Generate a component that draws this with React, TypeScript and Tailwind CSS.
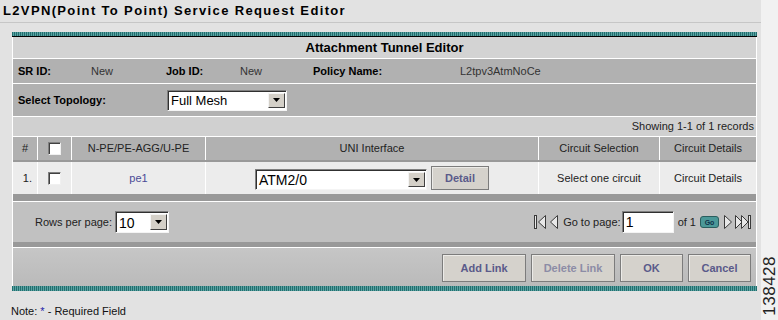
import React from 'react';

// small drop-down arrow used by the classic selects
function DownArrow() {
  return (
    <svg width="7" height="4" viewBox="0 0 7 4">
      <path d="M0 0 H7 L3.5 4 Z" fill="#000" />
    </svg>
  );
}

function Select({ value, className, textClass }: { value: string; className: string; textClass: string }) {
  return (
    <div className={`flex bg-white border border-t-[#808080] border-l-[#808080] border-r-[#f4f4f4] border-b-[#f4f4f4] shadow-[inset_1px_1px_0_#303030] ${className}`}>
      <div className={`flex-1 flex items-center pl-[3px] pt-[1px] text-black leading-none ${textClass}`}>{value}</div>
      <div className="w-[17px] my-[2px] mr-[1px] bg-[#d4d0c8] border border-t-[#f4f4f4] border-l-[#f4f4f4] border-r-[#404040] border-b-[#404040] flex items-center justify-center">
        <DownArrow />
      </div>
    </div>
  );
}

function Checkbox() {
  return (
    <div className="w-[13px] h-[13px] bg-white border border-t-[#808080] border-l-[#808080] border-r-[#f0f0f0] border-b-[#f0f0f0] shadow-[inset_1px_1px_0_#404040]" />
  );
}

function Btn({ label, className, disabled }: { label: string; className: string; disabled?: boolean }) {
  return (
    <div
      className={`flex items-center justify-center bg-[#d5d2cc] border border-[#7c7c7c] shadow-[inset_1px_1px_0_#ecebe8] font-bold text-[11px] ${
        disabled ? 'text-[#8c8ca6]' : 'text-[#5a5a8a]'
      } ${className}`}
    >
      {label}
    </div>
  );
}

function PagerIcon({ kind }: { kind: 'first' | 'prev' | 'next' | 'last' }) {
  const stroke = '#3a3a3a';
  if (kind === 'first')
    return (
      <svg width="12" height="16" viewBox="0 0 12 16">
        <rect x="0.5" y="1.5" width="2" height="13" fill="#e8e8e8" stroke={stroke} />
        <path d="M11.5 1.5 L4.5 8 L11.5 14.5 Z" fill="#e8e8e8" stroke={stroke} />
      </svg>
    );
  if (kind === 'prev')
    return (
      <svg width="9" height="16" viewBox="0 0 9 16">
        <path d="M8.5 1.5 L1.5 8 L8.5 14.5 Z" fill="#e8e8e8" stroke={stroke} />
      </svg>
    );
  if (kind === 'next')
    return (
      <svg width="9" height="16" viewBox="0 0 9 16">
        <path d="M0.5 1.5 L7.5 8 L0.5 14.5 Z" fill="#e8e8e8" stroke={stroke} />
      </svg>
    );
  return (
    <svg width="16" height="16" viewBox="0 0 16 16">
      <path d="M0.5 1.5 L7 8 L0.5 14.5 Z" fill="#e8e8e8" stroke={stroke} />
      <path d="M6.5 1.5 L13 8 L6.5 14.5 Z" fill="#e8e8e8" stroke={stroke} />
      <rect x="13.5" y="1.5" width="2" height="13" fill="#e8e8e8" stroke={stroke} />
    </svg>
  );
}

const teal = 'bg-[repeating-linear-gradient(90deg,#226e6e_0px,#226e6e_1px,#5aa3a3_1px,#5aa3a3_2px)]';

export default function App() {
  return (
    <div className="w-[778px] h-[320px] flex overflow-hidden bg-[#f1f1f1] font-[Liberation_Sans,Arial,Helvetica,sans-serif] text-[11px] text-[#222]">
      <div className="w-[765px] flex flex-col bg-[#e2e2e2]">
        {/* title */}
        <div className="h-[23px] border-b border-[#c6c6c6] pl-[3px] flex items-center text-[13px] font-bold tracking-[1.35px] text-black">
          L2VPN(Point To Point) Service Request Editor
        </div>

        <div className="pl-[12px] pt-[9px]">
          <div className="w-[745px]">
            <div className={`h-[4px] ${teal}`} />
            <div className="h-[1px] bg-black" />

            <div className="border-x border-white">
              {/* header */}
              <div className="h-[22px] border-b border-white bg-[#d3d3d3] flex items-center justify-center font-bold text-[13px] text-black">
                Attachment Tunnel Editor
              </div>

              {/* SR row */}
              <div className="h-[25px] border-b border-white bg-[#b1b1b1] flex items-center pl-[5px]">
                <span className="w-[73px] font-bold text-black">SR ID:</span>
                <span className="w-[75px] text-[#333]">New</span>
                <span className="w-[74px] font-bold text-black">Job ID:</span>
                <span className="w-[73px] text-[#333]">New</span>
                <span className="w-[147px] font-bold text-black">Policy Name:</span>
                <span className="text-[#333]">L2tpv3AtmNoCe</span>
              </div>

              {/* topology */}
              <div className="h-[33px] border-b border-white bg-[#b1b1b1] flex items-center pl-[5px]">
                <span className="w-[149px] font-bold text-black">Select Topology:</span>
                <Select value="Full Mesh" className="w-[120px] h-[21px]" textClass="text-[13px]" />
              </div>

              {/* showing */}
              <div className="h-[20px] border-b border-white bg-[#d0d0d0] flex items-center justify-end pr-[2px] text-[#222]">
                Showing 1-1 of 1 records
              </div>

              {/* table header */}
              <div className="h-[23px] bg-[#b1b1b1] flex divide-x divide-white">
                <div className="w-[25px] flex items-center pl-[9px]">#</div>
                <div className="w-[34px] flex items-center justify-center">
                  <Checkbox />
                </div>
                <div className="w-[134px] flex items-center justify-center">N-PE/PE-AGG/U-PE</div>
                <div className="w-[333px] flex items-center justify-center">UNI Interface</div>
                <div className="w-[121px] flex items-center justify-center">Circuit Selection</div>
                <div className="flex-1 flex items-center justify-center">Circuit Details</div>
              </div>
              <div className="h-[2px] bg-[#999]" />

              {/* data row */}
              <div className="h-[32px] bg-[#ececec] flex divide-x divide-white">
                <div className="w-[25px] flex items-center justify-end pr-[5px]">1.</div>
                <div className="w-[34px] flex items-center justify-center">
                  <Checkbox />
                </div>
                <div className="w-[134px] flex items-center justify-center text-[#4a4a96]">pe1</div>
                <div className="w-[333px] flex items-center justify-center gap-[4px]">
                  <Select value="ATM2/0" className="w-[172px] h-[21px] mt-[3px]" textClass="text-[14px]" />
                  <Btn label="Detail" className="w-[58px] h-[24px]" />
                </div>
                <div className="w-[121px] flex items-center justify-center">Select one circuit</div>
                <div className="flex-1 flex items-center justify-center">Circuit Details</div>
              </div>
              <div className="h-[8px] border-b border-white bg-[#999]" />

              {/* pagination */}
              <div className="h-[40px] bg-[#c1c1c1] flex items-center pl-[22px] pr-[5px]">
                <span className="text-[#222]">Rows per page:</span>
                <Select value="10" className="ml-[3px] w-[54px] h-[22px]" textClass="text-[14px]" />
                <div className="ml-auto flex items-center">
                  <PagerIcon kind="first" />
                  <span className="ml-[3px]">
                    <PagerIcon kind="prev" />
                  </span>
                  <span className="ml-[5px] text-[#222]">Go to page:</span>
                  <div className="ml-[1px] w-[52px] h-[22px] bg-white border border-t-[#808080] border-l-[#808080] border-r-[#f4f4f4] border-b-[#f4f4f4] shadow-[inset_1px_1px_0_#303030] flex items-center pl-[3px] text-[14px] text-black leading-none">
                    1
                  </div>
                  <span className="ml-[4px] text-[#222]">of 1</span>
                  <div className="ml-[4px] w-[19px] h-[12px] rounded-[3px] bg-[#4b9898] border border-[#2a5e5e] flex items-center justify-center text-[7px] font-bold text-[#10304a] leading-none">
                    Go
                  </div>
                  <span className="ml-[5px]">
                    <PagerIcon kind="next" />
                  </span>
                  <span className="ml-[2px]">
                    <PagerIcon kind="last" />
                  </span>
                </div>
              </div>
              <div className="h-[6px] border-b border-white bg-[#999]" />

              {/* buttons */}
              <div className="h-[38px] bg-[linear-gradient(#c6c6c6,#bababa)] flex items-center justify-end gap-[5px] pr-[5px] pt-[2px]">
                <Btn label="Add Link" className="w-[84px] h-[28px]" />
                <Btn label="Delete Link" className="w-[84px] h-[28px]" disabled />
                <Btn label="OK" className="w-[63px] h-[28px]" />
                <Btn label="Cancel" className="w-[63px] h-[28px]" />
              </div>
            </div>
            <div className={`h-[5px] ${teal}`} />
          </div>
        </div>

        <div className="mt-[14px] pl-[11px] leading-[13px] text-[11px] text-[#111]">
          Note: <span className="text-[#1c1ca8]">*</span> - Required Field
        </div>
      </div>

      {/* figure id strip */}
      <div className="flex-1 flex items-end justify-center pb-[4px]">
        <span className="[writing-mode:vertical-rl] rotate-180 text-[17px] leading-none tracking-[0.5px] text-[#222]">138428</span>
      </div>
    </div>
  );
}
